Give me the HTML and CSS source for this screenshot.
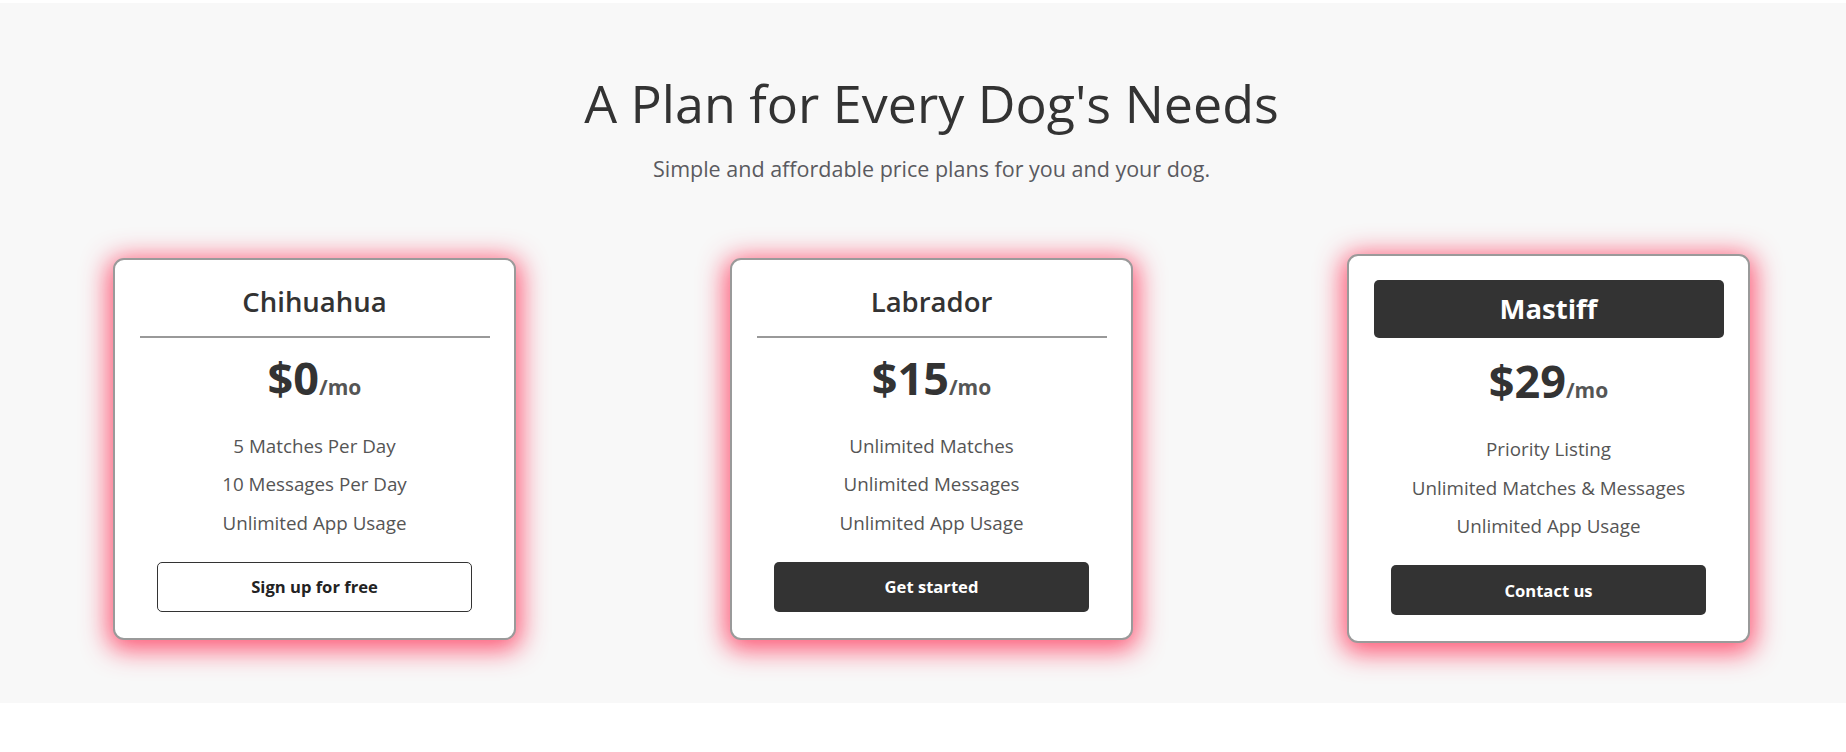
FILE: index.html
```html
<!DOCTYPE html>
<html lang="en">
<head>
<meta charset="utf-8">
<title>Pricing</title>
<link rel="stylesheet" href="styles.css">
</head>
<body>
<section class="pricing">
  <h2 class="pricing-title">A Plan for Every Dog's Needs</h2>
  <p class="pricing-sub">Simple and affordable price plans for you and your dog.</p>
  <div class="plans">
    <div class="card">
      <h3 class="plan-name">Chihuahua</h3>
      <hr class="divider">
      <div class="price">$0<span class="per">/mo</span></div>
      <ul class="features">
        <li>5 Matches Per Day</li>
        <li>10 Messages Per Day</li>
        <li>Unlimited App Usage</li>
      </ul>
      <button class="btn btn-outline">Sign up for free</button>
    </div>
    <div class="card">
      <h3 class="plan-name">Labrador</h3>
      <hr class="divider">
      <div class="price">$15<span class="per">/mo</span></div>
      <ul class="features">
        <li>Unlimited Matches</li>
        <li>Unlimited Messages</li>
        <li>Unlimited App Usage</li>
      </ul>
      <button class="btn btn-dark">Get started</button>
    </div>
    <div class="card card-featured">
      <h3 class="plan-name plan-name-box">Mastiff</h3>
      <div class="price">$29<span class="per">/mo</span></div>
      <ul class="features">
        <li>Priority Listing</li>
        <li>Unlimited Matches &amp; Messages</li>
        <li>Unlimited App Usage</li>
      </ul>
      <button class="btn btn-dark">Contact us</button>
    </div>
  </div>
</section>
</body>
</html>
```
FILE: styles.css
```css
* { box-sizing: border-box; }
html, body { margin: 0; padding: 0; background: #ffffff; }
body {
  padding-top: 3px;
  font-family: "Open Sans", "Noto Sans", "Liberation Sans", sans-serif;
  color: #333333;
}
.pricing {
  background: #f8f8f8;
  height: 700px;
  padding: 65px 0 0 17px;
  text-align: center;
}
.pricing-title {
  margin: 0;
  font-size: 52px;
  font-weight: 400;
  line-height: 70px;
  color: #333333;
}
.pricing-sub {
  margin: 18px 0 0;
  font-size: 21.5px;
  font-weight: 400;
  line-height: 26px;
  color: #5a5a5f;
}
.plans {
  display: flex;
  justify-content: center;
  align-items: center;
  gap: 214px;
  margin-top: 72px;
}
.card {
  width: 403px;
  background: #ffffff;
  border: 2px solid #9a9a9a;
  border-radius: 11px;
  padding: 24px 24.5px 26px;
  box-shadow: 0 5px 26px 5px rgba(255, 60, 95, 0.85);
  display: flex;
  flex-direction: column;
  align-items: center;
}
.plan-name {
  margin: 2px 0 0;
  font-size: 27.5px;
  font-weight: 600;
  line-height: 32px;
  color: #333333;
}
.divider {
  width: 100%;
  margin: 18px 0 16px;
  border: 0;
  border-top: 2px solid #999999;
}
.plan-name-box {
  margin: 0;
  width: 100%;
  height: 58px;
  line-height: 58px;
  background: #333333;
  color: #ffffff;
  border-radius: 5px;
  font-weight: 700;
}
.price {
  font-size: 45px;
  font-weight: 700;
  line-height: 48px;
  color: #333333;
}
.card-featured .price { margin-top: 19px; }
.per {
  font-size: 21px;
  font-weight: 700;
  color: #555555;
}
.features {
  list-style: none;
  margin: 16px 0 0;
  padding: 0;
  width: 100%;
}
.features li {
  font-size: 18.8px;
  line-height: 38.5px;
  color: #555555;
}
.btn {
  margin-top: 19.5px;
  width: 315px;
  height: 50px;
  border-radius: 5px;
  font-family: inherit;
  font-size: 16.6px;
  font-weight: 700;
  cursor: pointer;
}
.btn-outline {
  background: #ffffff;
  border: 1px solid #333333;
  color: #222222;
}
.btn-dark {
  background: #333333;
  border: 0;
  color: #ffffff;
}
```
